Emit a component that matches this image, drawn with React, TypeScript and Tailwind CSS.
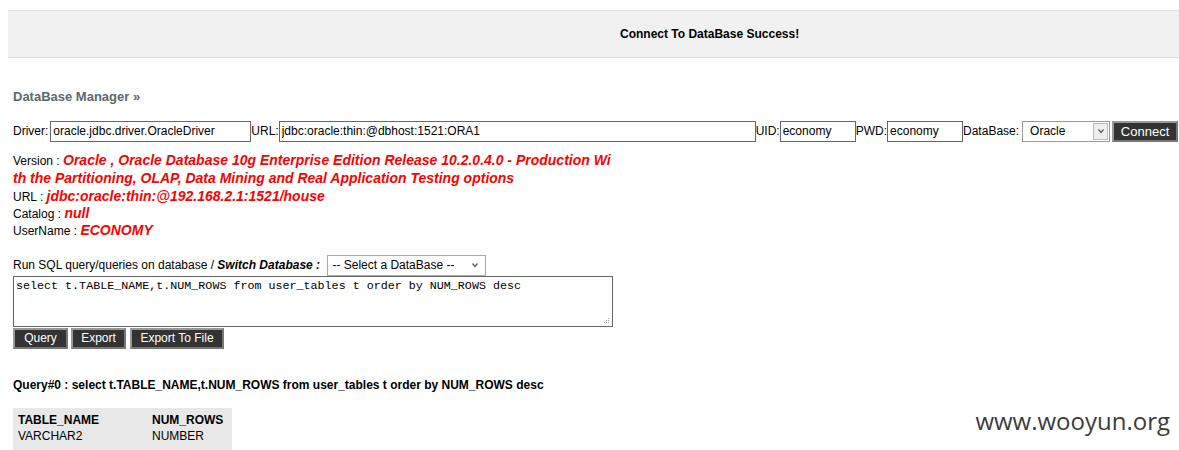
import React from 'react';

const info = [
  { label: 'URL', value: 'jdbc:oracle:thin:@192.168.2.1:1521/house' },
  { label: 'Catalog', value: 'null' },
  { label: 'UserName', value: 'ECONOMY' },
];

function Arrow() {
  return (
    <svg className="h-[8px] w-[8px]" viewBox="0 0 8 8" fill="none" stroke="#555" strokeWidth={1.2}>
      <path d="M1.5 2.5l2.5 3 2.5-3" />
    </svg>
  );
}

function DarkButton({ children, className = '' }: { children: React.ReactNode; className?: string }) {
  return (
    <button
      className={`flex h-[21px] shrink-0 items-center justify-center whitespace-nowrap bg-[#333] px-0 text-[12px] leading-none text-white border-2 border-[#777] border-t-[#999] border-l-[#999] ${className}`}
    >
      {children}
    </button>
  );
}

const field = 'h-[21px] shrink-0 border border-[#666] px-[2px] text-[12px] outline-none';

export default function App() {
  return (
    <div className="relative min-h-[450px] overflow-hidden bg-white font-['Liberation_Sans',Arial,sans-serif] text-[12px] text-black">
      {/* Status banner */}
      <div className="ml-2 mt-[10px] flex h-[48px] items-center border-y border-[#ddd] bg-[#f1f1f1] pl-[612px]">
        <span className="text-[12px] font-bold">Connect To DataBase Success!</span>
      </div>

      <div className="px-[13px]">
        <h2 className="mt-[29px] text-[13px] font-bold text-[#5c6770]">DataBase Manager »</h2>

        {/* Connection row */}
        <div className="mt-[14px] flex h-[21px] w-max items-center whitespace-nowrap">
          <span className="mr-[2px]">Driver:</span>
          <input className={`${field} w-[201px]`} defaultValue="oracle.jdbc.driver.OracleDriver" />
          <span>URL:</span>
          <input className={`${field} w-[477px]`} defaultValue="jdbc:oracle:thin:@dbhost:1521:ORA1" />
          <span>UID:</span>
          <input className={`${field} w-[76px]`} defaultValue="economy" />
          <span>PWD:</span>
          <input className={`${field} w-[76px]`} defaultValue="economy" />
          <span className="mr-[3px]">DataBase:</span>
          <div className="flex h-[21px] w-[88px] shrink-0 items-center justify-between border border-[#999] pl-[7px] pr-[1px]">
            <span>Oracle</span>
            <span className="flex h-[17px] w-[15px] items-center justify-center border border-[#bbb] bg-[#eee]">
              <Arrow />
            </span>
          </div>
          <DarkButton className="ml-[2px] w-[66px] text-[13px]">Connect</DarkButton>
        </div>

        {/* Connection info */}
        <div className="mt-[10px] w-[599px] break-all leading-[17px]">
          <span>Version : </span>
          <span className="text-[14px] font-bold italic leading-[17px] text-[#f00]">
            Oracle , Oracle Database 10g Enterprise Edition Release 10.2.0.4.0 - Production With the Partitioning, OLAP, Data Mining and Real Application Testing options
          </span>
        </div>
        {info.map((row) => (
          <div key={row.label} className="h-[17px] leading-[17px]">
            <span>{row.label} : </span>
            <span className="text-[14px] font-bold italic leading-[17px] text-[#f00]">{row.value}</span>
          </div>
        ))}

        {/* SQL */}
        <div className="mt-[16px] flex h-[21px] items-center whitespace-nowrap">
          <span>Run SQL query/queries on database / </span>
          <span className="font-bold italic">&nbsp;Switch Database :&nbsp;</span>
          <div className="ml-[4px] flex h-[21px] w-[159px] items-center justify-between border border-[#aaa] pl-[4px] pr-[6px]">
            <span>-- Select a DataBase --</span>
            <Arrow />
          </div>
        </div>
        <div className="relative h-[51px] w-[600px] border border-[#666]">
          <div className="pl-[2px] pt-[2px] font-['Liberation_Mono','Courier_New',monospace] text-[11.7px] leading-[14px]">
            select t.TABLE_NAME,t.NUM_ROWS from user_tables t order by NUM_ROWS desc
          </div>
          <svg className="absolute bottom-[2px] right-[2px] h-[7px] w-[7px]" viewBox="0 0 7 7" fill="#aaa">
            <rect x="5" y="1" width="1" height="1" />
            <rect x="3" y="3" width="1" height="1" />
            <rect x="5" y="3" width="1" height="1" />
            <rect x="1" y="5" width="1" height="1" />
            <rect x="3" y="5" width="1" height="1" />
            <rect x="5" y="5" width="1" height="1" />
          </svg>
        </div>
        <div className="mt-[1px] flex gap-[3px]">
          <DarkButton className="w-[55px]">Query</DarkButton>
          <DarkButton className="w-[55px]">Export</DarkButton>
          <DarkButton className="ml-[1px] w-[94px]">Export To File</DarkButton>
        </div>

        {/* Result */}
        <p className="mt-[27px] font-bold">Query#0 : select t.TABLE_NAME,t.NUM_ROWS from user_tables t order by NUM_ROWS desc</p>
        <table className="mt-[14px] w-[219px] bg-[#e8e8e8] text-left">
          <tbody>
            <tr className="leading-[16px]">
              <th className="w-[139px] pl-[5px] pt-[4px] font-bold">TABLE_NAME</th>
              <th className="pt-[4px] font-bold">NUM_ROWS</th>
            </tr>
            <tr className="leading-[16px]">
              <td className="pl-[5px] pb-[8px]">VARCHAR2</td>
              <td className="pb-[8px]">NUMBER</td>
            </tr>
          </tbody>
        </table>
      </div>

      {/* Watermark */}
      <div className="absolute right-[9px] top-[403px] font-['Open_Sans','Noto_Sans',sans-serif] text-[24px] text-[#3c3c3c]">
        www.wooyun.org
      </div>
    </div>
  );
}
